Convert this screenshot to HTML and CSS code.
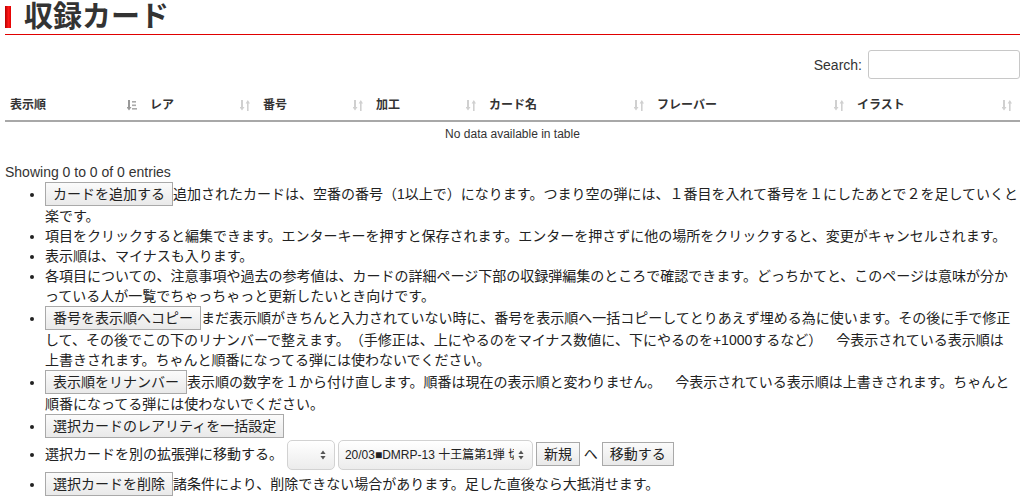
FILE: index.html
```html
<!DOCTYPE html>
<html lang="ja">
<head>
<meta charset="utf-8">
<title>収録カード</title>
<link rel="stylesheet" href="styles.css">
</head>
<body>
<div class="page">
  <h1 class="title"><span class="title-mark"></span>収録カード</h1>

  <div class="search-row">
    <label class="search-label" for="q">Search:</label>
    <input id="q" class="search-input" type="search">
  </div>

  <table class="cards">
    <colgroup>
      <col class="c1"><col class="c2"><col class="c2"><col class="c2"><col class="c3"><col class="c4"><col class="c3">
    </colgroup>
    <thead>
      <tr>
        <th><div class="th-in"><span>表示順</span><svg class="sort sorted" viewBox="0 0 10 11" width="10" height="11"><path d="M1 0h2v7h1.5L2 10.5-.5 7H1z" fill="#999"/><rect x="5" y="1" width="4" height="1.6" fill="#aaa"/><rect x="5" y="4.5" width="4" height="1.6" fill="#aaa"/><rect x="5" y="8" width="5" height="1.6" fill="#aaa"/></svg></div></th>
        <th><div class="th-in"><span>レア</span><svg class="sort" viewBox="0 0 10 11" width="10" height="11"><path d="M1 0h2v7h1.5L2 10.5-.5 7H1z" fill="#d0d0d0"/><path d="M7 11h1.6V3.5H10L7.8 0 5.6 3.5H7z" fill="#d0d0d0"/></svg></div></th>
        <th><div class="th-in"><span>番号</span><svg class="sort" viewBox="0 0 10 11" width="10" height="11"><path d="M1 0h2v7h1.5L2 10.5-.5 7H1z" fill="#d0d0d0"/><path d="M7 11h1.6V3.5H10L7.8 0 5.6 3.5H7z" fill="#d0d0d0"/></svg></div></th>
        <th><div class="th-in"><span>加工</span><svg class="sort" viewBox="0 0 10 11" width="10" height="11"><path d="M1 0h2v7h1.5L2 10.5-.5 7H1z" fill="#d0d0d0"/><path d="M7 11h1.6V3.5H10L7.8 0 5.6 3.5H7z" fill="#d0d0d0"/></svg></div></th>
        <th><div class="th-in"><span>カード名</span><svg class="sort" viewBox="0 0 10 11" width="10" height="11"><path d="M1 0h2v7h1.5L2 10.5-.5 7H1z" fill="#d0d0d0"/><path d="M7 11h1.6V3.5H10L7.8 0 5.6 3.5H7z" fill="#d0d0d0"/></svg></div></th>
        <th><div class="th-in"><span>フレーバー</span><svg class="sort" viewBox="0 0 10 11" width="10" height="11"><path d="M1 0h2v7h1.5L2 10.5-.5 7H1z" fill="#d0d0d0"/><path d="M7 11h1.6V3.5H10L7.8 0 5.6 3.5H7z" fill="#d0d0d0"/></svg></div></th>
        <th><div class="th-in"><span>イラスト</span><svg class="sort" viewBox="0 0 10 11" width="10" height="11"><path d="M1 0h2v7h1.5L2 10.5-.5 7H1z" fill="#d0d0d0"/><path d="M7 11h1.6V3.5H10L7.8 0 5.6 3.5H7z" fill="#d0d0d0"/></svg></div></th>
      </tr>
    </thead>
    <tbody>
      <tr><td class="empty" colspan="7">No data available in table</td></tr>
    </tbody>
  </table>

  <div class="info">Showing 0 to 0 of 0 entries</div>

  <ul class="notes">
    <li><button class="btn" type="button">カードを追加する</button>追加されたカードは、空番の番号（1以上で）になります。つまり空の弾には、１番目を入れて番号を１にしたあとで２を足していくと楽です。</li>
    <li>項目をクリックすると編集できます。エンターキーを押すと保存されます。エンターを押さずに他の場所をクリックすると、変更がキャンセルされます。</li>
    <li>表示順は、マイナスも入ります。</li>
    <li>各項目についての、注意事項や過去の参考値は、カードの詳細ページ下部の収録弾編集のところで確認できます。どっちかてと、このページは意味が分かっている人が一覧でちゃっちゃっと更新したいとき向けです。</li>
    <li><button class="btn" type="button">番号を表示順へコピー</button>まだ表示順がきちんと入力されていない時に、番号を表示順へ一括コピーしてとりあえず埋める為に使います。その後に手で修正して、その後でこの下のリナンバーで整えます。（手修正は、上にやるのをマイナス数値に、下にやるのを+1000するなど）　今表示されている表示順は<br>上書きされます。ちゃんと順番になってる弾には使わないでください。</li>
    <li><button class="btn" type="button">表示順をリナンバー</button>表示順の数字を１から付け直します。順番は現在の表示順と変わりません。　今表示されている表示順は上書きされます。ちゃんと<br>順番になってる弾には使わないでください。</li>
    <li><button class="btn" type="button">選択カードのレアリティを一括設定</button></li>
    <li class="move-row">選択カードを別の拡張弾に移動する。 <span class="sel sel-small"><select><option></option></select><svg class="sel-arrow" viewBox="0 0 6 10" width="6" height="10"><path d="M3 0.5 5.6 4H.4zM3 9.5 .4 6h5.2z" fill="#555"/></svg></span><span class="sel sel-large"><select><option>20/03■DMRP-13 十王篇第1弾 切札！マスターズ</option></select><svg class="sel-arrow" viewBox="0 0 6 10" width="6" height="10"><path d="M3 0.5 5.6 4H.4zM3 9.5 .4 6h5.2z" fill="#555"/></svg></span><button class="btn" type="button">新規</button> へ <button class="btn" type="button">移動する</button></li>
    <li><button class="btn" type="button">選択カードを削除</button>諸条件により、削除できない場合があります。足した直後なら大抵消せます。</li>
  </ul>
</div>
</body>
</html>
```

FILE: styles.css
```css
html, body {
  margin: 0;
  padding: 0;
  background: #fff;
}

body {
  font-family: "Liberation Sans", "Noto Sans CJK JP", sans-serif;
  font-size: 14px;
  line-height: 20px;
  color: #222;
  text-spacing-trim: space-all;
  line-break: loose;
}

.page {
  padding: 0 11px 0 5px;
}

.title {
  display: flex;
  align-items: center;
  margin: 0;
  padding: 2px 0;
  font-size: 29px;
  line-height: 30px;
  font-weight: bold;
  color: #333;
  border-bottom: 1px solid #e00000;
}

.title-mark {
  display: block;
  width: 6px;
  height: 22px;
  margin-right: 13px;
  background: linear-gradient(to right, #b80000, #ff1a1a 60%, #e00000);
}

.search-row {
  display: flex;
  justify-content: flex-end;
  align-items: center;
  gap: 6px;
  margin-top: 15px;
}

.search-label {
  font-size: 14px;
  color: #333;
}

.search-input {
  box-sizing: border-box;
  width: 152px;
  height: 29px;
  margin: 0;
  border: 1px solid #c8c8c8;
  border-radius: 3px;
  background: #fff;
}

.cards {
  width: 100%;
  margin-top: 12px;
  border-collapse: collapse;
  table-layout: fixed;
  font-size: 12px;
}

.c1 { width: 140px; }
.c2 { width: 113px; }
.c3 { width: 168px; }
.c4 { width: 200px; }

.cards th {
  padding: 7px 0 7px 5px;
  line-height: 15px;
  text-align: left;
  font-weight: bold;
  color: #333;
  border-bottom: 2px solid #a8a8a8;
}

.th-in {
  display: flex;
  justify-content: space-between;
  align-items: center;
  padding-right: 8px;
}

.sort {
  display: block;
  flex: none;
}

.cards td.empty {
  padding: 5px;
  line-height: 15px;
  text-align: center;
  color: #333;
}

.info {
  margin-top: 15px;
  color: #333;
}

.notes {
  margin: 0;
  padding-left: 40px;
}

.btn {
  display: inline-block;
  margin: 0;
  padding: 1px 7px;
  font-family: inherit;
  font-size: 14px;
  line-height: 20px;
  color: #222;
  background: linear-gradient(#fbfbfb, #e9e9e9);
  border: 1px solid #a9a9a9;
  border-radius: 0;
}

.sel {
  display: inline-flex;
  align-items: center;
  box-sizing: border-box;
  height: 30px;
  margin: 2px 3px 2px 0;
  padding: 0 8px 0 6px;
  vertical-align: middle;
  border: 1px solid #d2d2d2;
  border-radius: 5px;
  background: linear-gradient(#ffffff, #ececec);
}

.sel select {
  flex: 1;
  min-width: 0;
  margin: 0;
  padding: 0;
  border: none;
  background: transparent;
  appearance: none;
  -webkit-appearance: none;
  font-family: "Liberation Sans", "Noto Sans CJK JP", sans-serif;
  font-size: 12px;
  color: #222;
  outline: none;
}

.sel-arrow {
  flex: none;
  margin-left: 4px;
}

.sel-small { width: 48px; }
.sel-large { width: 195px; }
```
